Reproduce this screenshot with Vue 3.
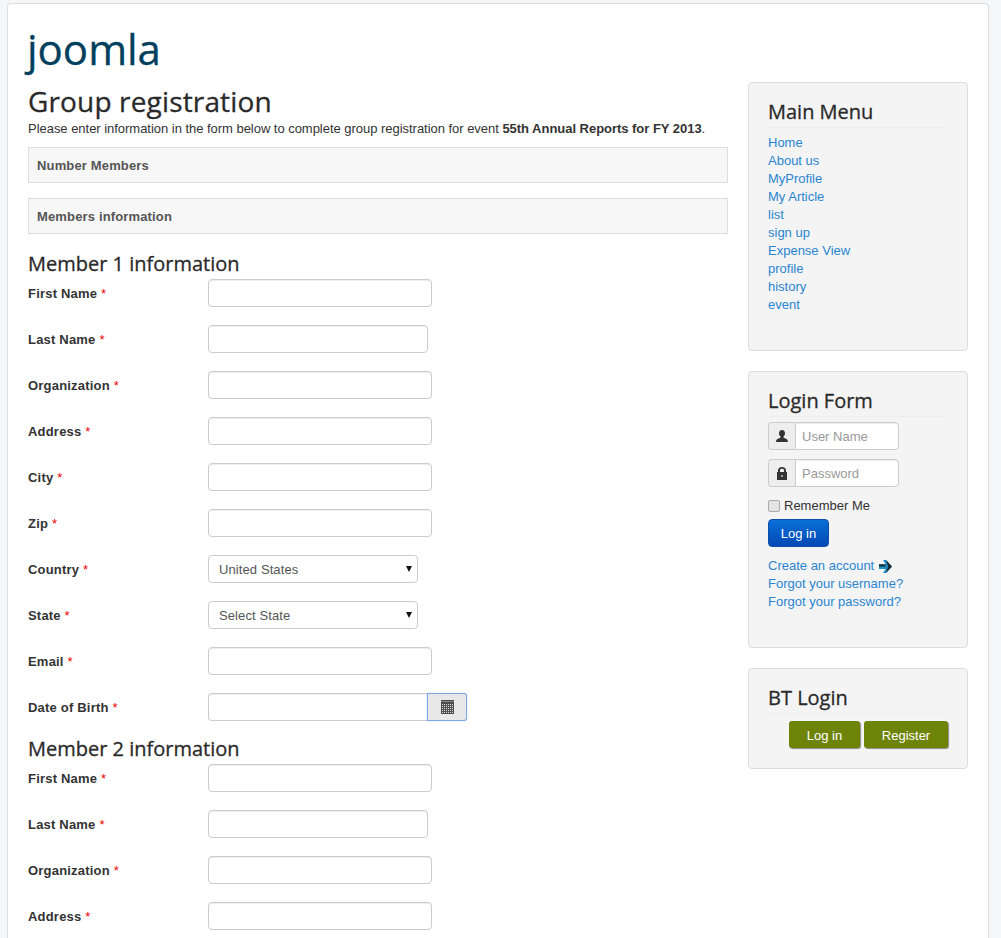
<script setup>
const menuItems = ['Home', 'About us', 'MyProfile', 'My Article', 'list', 'sign up', 'Expense View', 'profile', 'history', 'event']

const members = [
  {
    title: 'Member 1 information',
    fields: [
      { label: 'First Name', type: 'text' },
      { label: 'Last Name', type: 'text', short: true },
      { label: 'Organization', type: 'text' },
      { label: 'Address', type: 'text' },
      { label: 'City', type: 'text' },
      { label: 'Zip', type: 'text' },
      { label: 'Country', type: 'select', options: ['United States'] },
      { label: 'State', type: 'select', options: ['Select State'] },
      { label: 'Email', type: 'text' },
      { label: 'Date of Birth', type: 'date' }
    ]
  },
  {
    title: 'Member 2 information',
    fields: [
      { label: 'First Name', type: 'text' },
      { label: 'Last Name', type: 'text', short: true },
      { label: 'Organization', type: 'text' },
      { label: 'Address', type: 'text' }
    ]
  }
]
</script>

<template>
  <div class="page">
    <div class="card">
      <div class="brand">joomla</div>
      <div class="columns">
        <main class="main">
          <h1>Group registration</h1>
          <p class="intro">
            Please enter information in the form below to complete group registration for event
            <b>55th Annual Reports for FY 2013</b>.
          </p>
          <div class="panel">Number Members</div>
          <div class="panel">Members information</div>

          <section v-for="member in members" :key="member.title" class="member">
            <h2>{{ member.title }}</h2>
            <div v-for="field in member.fields" :key="field.label" class="row">
              <label>{{ field.label }} <span class="req">*</span></label>
              <input v-if="field.type === 'text'" type="text" :class="{ short: field.short }" />
              <div v-else-if="field.type === 'select'" class="select-wrap">
                <select>
                  <option v-for="opt in field.options" :key="opt">{{ opt }}</option>
                </select>
              </div>
              <div v-else class="date">
                <input type="text" />
                <button type="button" aria-label="Pick date">
                  <svg width="13" height="14" viewBox="0 0 13 14">
                    <path d="M0 0h13v14H0z" fill="#4a4a4a" />
                    <path d="M1 4h11v9H1z" fill="#d4d4d4" />
                    <path d="M1 5.500h11M1 7.500h11M1 9.500h11M1 11.500h11M2.500 4v9M4.500 4v9M6.500 4v9M8.500 4v9M10.500 4v9" stroke="#555" stroke-width="1" />
                    <path d="M0 1h13v1H0z" fill="#888" />
                  </svg>
                </button>
              </div>
            </div>
          </section>
        </main>

        <aside class="sidebar">
          <div class="module menu-module">
            <h3>Main Menu</h3>
            <ul class="menu-list">
              <li v-for="item in menuItems" :key="item"><a href="#">{{ item }}</a></li>
            </ul>
          </div>

          <div class="module login-module">
            <h3>Login Form</h3>
            <div class="addon">
              <span class="addon-icon">
                <svg width="14" height="14" viewBox="0 0 14 14">
                  <path d="M7 1c2 0 3 1.400 3 3.300 0 1.500-.7 2.800-1.500 3.400v1.100C10.500 9.500 13 10.200 13 13H1c0-2.800 2.500-3.500 4.500-4.200V7.700C4.700 7.100 4 5.800 4 4.300 4 2.400 5 1 7 1z" fill="#333" />
                </svg>
              </span>
              <input type="text" placeholder="User Name" />
            </div>
            <div class="addon">
              <span class="addon-icon">
                <svg width="14" height="14" viewBox="0 0 14 14">
                  <path fill-rule="evenodd" d="M3 6V4.500C3 2.200 4.700 1 7 1s4 1.200 4 3.500V6h1v8H2V6zm2 0h4V4.500C9 3.300 8.200 2.800 7 2.800s-2 .5-2 1.700zm1.400 3v2h1.200V9z" fill="#333" />
                </svg>
              </span>
              <input type="text" placeholder="Password" />
            </div>
            <label class="remember"><span class="check"></span>Remember Me</label>
            <button type="button" class="primary">Log in</button>
            <ul class="login-links">
              <li>
                <a href="#">Create an account</a>
                <svg class="arrow" width="13" height="13" viewBox="0 0 13 13">
                  <path d="M4 0h3l6 6.500L7 13H4l2.500-4H0V4h6.500z" fill="#1f8fc4" />
                  <path d="M7 0l6 6.500L7 13l2-6.500zM0 4.500h6l1 2H0z" fill="#1c2b33" />
                </svg>
              </li>
              <li><a href="#">Forgot your username?</a></li>
              <li><a href="#">Forgot your password?</a></li>
            </ul>
          </div>

          <div class="module bt-module">
            <h3>BT Login</h3>
            <div class="bt-buttons">
              <button type="button" class="olive login-btn">Log in</button>
              <button type="button" class="olive register-btn">Register</button>
            </div>
          </div>
        </aside>
      </div>
    </div>
  </div>
</template>

<style>
html,
body {
  margin: 0;
  height: 938px;
  overflow: hidden;
  background: #f4f6f7;
}
</style>

<style scoped>
.page {
  padding: 3px 12px 0 7px;
  font-family: 'Liberation Sans', Arial, sans-serif;
  font-size: 13px;
  line-height: 18px;
  color: #333;
}

.card {
  background: #fff;
  border: 1px solid #dedede;
  border-bottom: 0;
  border-radius: 4px 4px 0 0;
  padding: 20px;
  height: 935px;
  overflow: hidden;
  box-sizing: border-box;
}

.brand {
  font-family: 'Open Sans', sans-serif;
  font-size: 42px;
  line-height: 50px;
  color: #00405d;
  -webkit-text-stroke: 0.3px #00405d;
  margin-bottom: 8px;
  margin-left: -1px;
}

.columns {
  display: flex;
  gap: 20px;
}

.main {
  width: 700px;
  padding-top: 4px;
}

.sidebar {
  width: 220px;
  display: flex;
  flex-direction: column;
  gap: 20px;
}

h1,
h2,
h3 {
  font-family: 'Open Sans', sans-serif;
  font-weight: 500;
  color: #2a2a2a;
  margin: 0;
  -webkit-text-stroke: 0.3px #2a2a2a;
}

h1 {
  font-size: 28px;
  line-height: 30px;
  letter-spacing: 0.15px;
}

.intro {
  margin: 4px 0 9px;
  letter-spacing: -0.03px;
}

.panel {
  height: 36px;
  box-sizing: border-box;
  border: 1px solid #ddd;
  background: #f7f7f7;
  padding: 0 8px;
  line-height: 36px;
  font-weight: bold;
  letter-spacing: 0.15px;
  color: #555;
  margin-bottom: 15px;
}

.member h2 {
  font-size: 20px;
  line-height: 30px;
}

.row {
  display: flex;
  align-items: center;
  height: 28px;
  margin-bottom: 18px;
}

.row:last-child {
  margin-bottom: 0;
}

.member + .member {
  margin-top: 13px;
}

.row label {
  width: 180px;
  padding-top: 2px;
  font-weight: bold;
  letter-spacing: 0.2px;
  color: #333;
  flex-shrink: 0;
}

.req {
  color: #e00;
  font-weight: normal;
}

input[type='text'] {
  box-sizing: border-box;
  width: 224px;
  height: 28px;
  border: 1px solid #ccc;
  border-radius: 4px;
  padding: 4px 6px;
  background: #fff;
  box-shadow: inset 0 1px 1px rgba(0, 0, 0, 0.075);
  font-family: inherit;
  font-size: 13px;
  outline: none;
}

input.short {
  width: 220px;
}

.select-wrap {
  position: relative;
  width: 210px;
  height: 28px;
}

.select-wrap::after {
  content: '';
  position: absolute;
  right: 6px;
  top: 11px;
  border-left: 3px solid transparent;
  border-right: 3px solid transparent;
  border-top: 6px solid #111;
  pointer-events: none;
}

select {
  appearance: none;
  box-sizing: border-box;
  width: 210px;
  height: 28px;
  border: 1px solid #ccc;
  border-radius: 4px;
  background: #fff;
  padding: 0 10px;
  font-family: inherit;
  font-size: 13px;
  letter-spacing: 0.1px;
  color: #555;
}

.date {
  display: flex;
}

.date input[type='text'] {
  width: 220px;
  border-radius: 4px 0 0 4px;
  border-right: 0;
}

.date button {
  box-sizing: border-box;
  width: 40px;
  height: 28px;
  margin-left: -1px;
  border: 1px solid #7fa6e6;
  border-radius: 0 3px 3px 0;
  background: #e8e8e8;
  box-shadow: 0 0 1px #6f9be6;
  padding: 0;
  display: flex;
  align-items: center;
  justify-content: center;
}

.module {
  box-sizing: border-box;
  background: #f4f4f5;
  border: 1px solid #ddd;
  border-radius: 4px;
  padding: 19px;
}

.module h3 {
  font-size: 20px;
  line-height: 24px;
  margin-top: -2px;
  padding-bottom: 3px;
  border-bottom: 1px solid #eee;
  margin-bottom: 5px;
}

.module ul {
  list-style: none;
  margin: 0;
  padding: 0;
}

.module .menu-list {
  padding-top: 1px;
}

.module a {
  color: #2a85d0;
  text-decoration: none;
}

.menu-module {
  height: 269px;
}

.login-module {
  height: 277px;
}

.bt-module {
  height: 101px;
}

.addon {
  display: flex;
  margin-bottom: 9px;
  width: 131px;
  height: 28px;
}

.addon-icon {
  box-sizing: border-box;
  width: 28px;
  height: 28px;
  background: #eee;
  border: 1px solid #ccc;
  border-right: 0;
  border-radius: 4px 0 0 4px;
  display: flex;
  align-items: center;
  justify-content: center;
}

.addon input[type='text'] {
  width: 104px;
  border-radius: 0 4px 4px 0;
}

.addon input::placeholder {
  color: #999;
  opacity: 1;
}

.remember {
  box-sizing: border-box;
  display: flex;
  align-items: center;
  gap: 4px;
  height: 18px;
  padding-top: 2px;
  margin-bottom: 5px;
}

.check {
  box-sizing: border-box;
  width: 12px;
  height: 12px;
  border: 1px solid #aaa;
  border-radius: 2px;
  background: #e4e4e4;
}

.primary {
  display: block;
  width: 61px;
  height: 28px;
  padding: 0;
  border: 1px solid #0a4fa8;
  border-radius: 4px;
  background: linear-gradient(#0a6fd8, #0348b4);
  color: #fff;
  font-family: inherit;
  font-size: 13px;
}

.module .login-links {
  margin-top: 10px;
}

.login-links li {
  display: flex;
  align-items: center;
  gap: 5px;
}

.bt-buttons {
  display: flex;
  justify-content: flex-end;
  gap: 4px;
  margin-top: 7px;
}

.olive {
  height: 27px;
  padding: 1px 0 0;
  border: 0;
  border-radius: 3px;
  background: #6e8408;
  box-shadow: 1px 1px 1px #8a8a8a;
  color: #fff;
  font-family: inherit;
  font-size: 13px;
}

.login-btn {
  width: 71px;
}

.register-btn {
  width: 84px;
}
</style>
